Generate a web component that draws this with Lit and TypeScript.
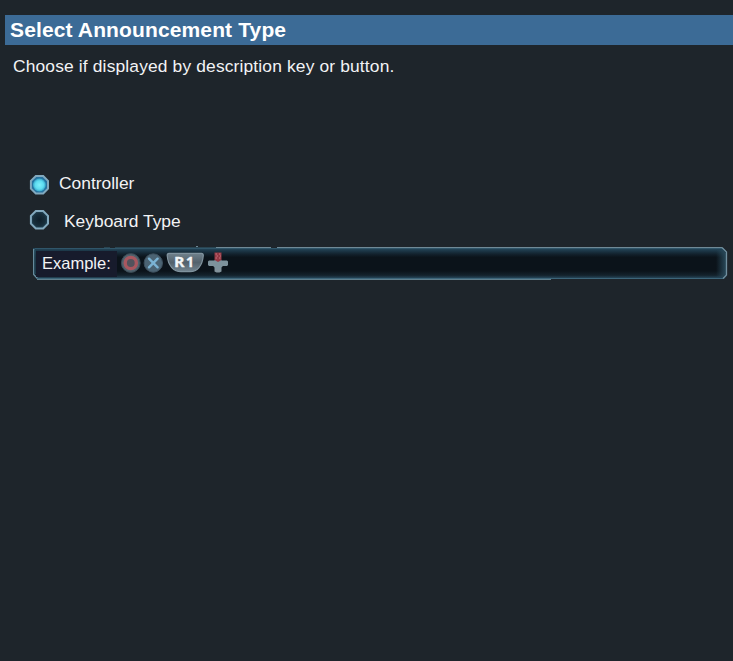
import { LitElement, html, css, svg } from "lit";
import { customElement, property, state } from "lit/decorators.js";

@customElement("option-row")
class OptionRow extends LitElement {
  @property() label = "";
  @property({ type: Boolean, reflect: true }) checked = false;

  static styles = css`
    :host { display: flex; align-items: flex-start; height: 22px; cursor: pointer; }
    svg { display: block; width: 20px; height: 20px; flex: none; }
    .label { margin-left: var(--label-gap, 10px); line-height: 20px; white-space: nowrap; margin-top: var(--label-shift, 0); }
  `;

  render() {
    return html`
      <svg viewBox="0 0 20 20">
        <defs>
          <radialGradient id="lit">
            <stop offset="0" stop-color="#7df0fb" />
            <stop offset=".65" stop-color="#5ddcf1" />
            <stop offset="1" stop-color="#36a5c8" />
          </radialGradient>
          <radialGradient id="off">
            <stop offset="0" stop-color="#0f1f2a" />
            <stop offset=".7" stop-color="#172e3b" />
            <stop offset="1" stop-color="#24485a" />
          </radialGradient>
        </defs>
        <path d="M6.8 1h7.4l4.8 4.8v7.8l-4.8 4.9H6.8l-4.9-4.9V5.8z" 
          fill=${this.checked ? "#2673a0" : "url(#off)"} stroke="#82a9be" stroke-width="2" />
        ${this.checked ? svg`<circle cx="10.4" cy="10" r="6.4" fill="url(#lit)" />` : null}
      </svg>
      <span class="label">${this.label}</span>
    `;
  }
}

@customElement("button-example")
class ButtonExample extends LitElement {
  static styles = css`
    :host { display: flex; position: relative; width: 695px; height: 34px; }
    .frame { position: absolute; inset: 0; width: 695px; height: 34px; }
    .content { position: relative; display: flex; align-items: center; padding-left: 3px; height: 33px; }
    .label { background: #171b2c; box-sizing: border-box; width: 81px; height: 26px; line-height: 25px; margin-top: 2px; padding-left: 6px; font-size: 16.5px; }
    .icons { display: block; width: 110px; height: 24px; margin: 1px 0 0 3px; }
    .icons text { font: bold 14px "Open Sans", "Liberation Sans", sans-serif; }
  `;

  render() {
    return html`
      <svg class="frame" viewBox="0 0 695 34">
        <defs>
          <linearGradient id="bg" x2="0" y2="1">
            <stop offset="0" stop-color="#274a5e" />
            <stop offset=".1" stop-color="#1b3545" />
            <stop offset=".2" stop-color="#12212c" />
            <stop offset=".3" stop-color="#0b131a" />
            <stop offset=".74" stop-color="#0b131a" />
            <stop offset=".88" stop-color="#14222c" />
            <stop offset="1" stop-color="#2b5268" />
          </linearGradient>
          <linearGradient id="edge" x1="1" x2="0">
            <stop offset="0" stop-color="#29495a" />
            <stop offset="1" stop-color="#29495a" stop-opacity="0" />
          </linearGradient>
        </defs>
        <path d="M0 2H690L694 6V30L691 33H4L0 29z" fill="url(#bg)" />
        <path d="M683 4H690L693 7V29L690 31H683z" fill="url(#edge)" />
        <path d="M.7 3V28.5L4.5 32.5" fill="none" stroke="#6b91a3" stroke-width="1.3" />
        <path d="M2 4V28" stroke="#254b5e" stroke-width="1.4" />
        <path d="M2 2.5H690" stroke="#30566a" />
        <path d="M4 32.5H690" stroke="#3d6579" />
        <path d="M4 33.5H518" stroke="#617f8c" />
        <path d="M183 1.5H238M244 1.5H689" stroke="#6f8996" />
        <path d="M71 1.5H77M82 1.5H183" stroke="#294451" />
        <path d="M163 .5H165" stroke="#6f8996" />
        <path d="M689 1.5L693.5 6V29L690 32.5" fill="none" stroke="#718f9f" stroke-width="1.3" />
      </svg>
      <div class="content">
        <span class="label">Example:</span>
        <svg class="icons" viewBox="0 0 110 24">
          <defs>
            <linearGradient id="key" x2="0" y2="1">
              <stop offset="0" stop-color="#70818c" />
              <stop offset=".5" stop-color="#53626c" />
              <stop offset="1" stop-color="#738590" />
            </linearGradient>
          </defs>
          <circle cx="10.8" cy="12" r="9.4" fill="#4f626d" stroke="#3a4a55" />
          <circle cx="10.8" cy="12" r="5.6" fill="#52525c" stroke="#a8575f" stroke-width="3.4" />
          <circle cx="33.3" cy="12" r="9.2" fill="#4b6373" stroke="#3d505e" />
          <path d="M29 7.7L37.6 16.3M37.6 7.7L29 16.3" stroke="#7bb3d4" stroke-width="2.4" stroke-linecap="round" />
          <path d="M49 2.3H81.5Q83.3 2.3 83.3 4.5C82.5 15 77 20.7 70 20.7H61C54 20.7 48 15 47.2 4.5Q47.2 2.3 49 2.3z"
            fill="url(#key)" stroke="#80939e" stroke-width="1.2" />
          <text y="16" fill="#f1f5f7" stroke="#f1f5f7" stroke-width=".3"><tspan x="54" textLength="10.5" lengthAdjust="spacingAndGlyphs">R</tspan><tspan x="66">1</tspan></text>
          <path d="M94.5 9H101.5V20.5L99.5 21.5H96.5L94.5 20.5z" fill="#82929b" />
          <path d="M89 9.5H107L108 10.5V14L107 15H103L98 19L93 15H89L88 14V10.5z" fill="#7d929c" />
          <path d="M94.5 1.5H101.5V9L98 11L94.5 9z" fill="#943844" />
          <path d="M95.5 3H97M99 3H100.5M96.5 5H98M100 5H101M95.5 7H97M99 7H100.5" stroke="#c9747e" />
        </svg>
      </div>
    `;
  }
}

@customElement("app-root")
class AppRoot extends LitElement {
  @state() private selected = "controller";

  static styles = css`
    :host {
      display: flex; flex-direction: column; box-sizing: border-box; height: 661px;
      padding-top: 15px; background: #1e252b; color: #f2f3f5; overflow: hidden;
      font: 17.4px "Liberation Sans", Arial, sans-serif;
    }
    h1 {
      margin: 0 0 0 5px; padding-left: 5px; height: 30px; line-height: 29px;
      background: #3c6b96; color: #fff; font-size: 21px; font-weight: bold; letter-spacing: 0.13px;
    }
    .hint { margin: 11px 0 0 13px; line-height: 20px; letter-spacing: 0.15px; }
    .options { margin: 99px 0 0 29px; display: flex; flex-direction: column; gap: 13px; }
    .first { --label-gap: 10px; --label-shift: -2px; }
    .second { --label-gap: 15px; --label-shift: 1px; }
    button-example { margin: 14px 0 0 33px; }
  `;

  render() {
    return html`
      <h1>Select Announcement Type</h1>
      <p class="hint">Choose if displayed by description key or button.</p>
      <div class="options">
        <option-row class="first" label="Controller" ?checked=${this.selected === "controller"}
          @click=${() => (this.selected = "controller")}></option-row>
        <option-row class="second" label="Keyboard Type" ?checked=${this.selected === "keyboard"}
          @click=${() => (this.selected = "keyboard")}></option-row>
      </div>
      <button-example></button-example>
    `;
  }
}
